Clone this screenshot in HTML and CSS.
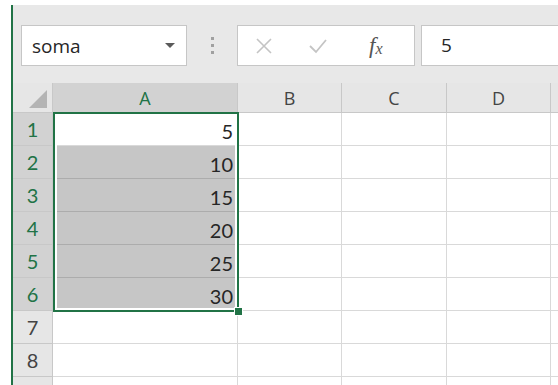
FILE: index.html
```html
<!DOCTYPE html>
<html lang="pt">
<head>
  <meta charset="UTF-8">
  <title>Planilha</title>
  <link rel="stylesheet" href="styles.css">
</head>
<body>
  <div class="app">
    <div class="formula-bar">
      <div class="name-box">
        <span class="name-box__value">soma</span>
        <span class="name-box__arrow"></span>
      </div>
      <div class="grip"><i></i><i></i><i></i></div>
      <div class="fx-buttons">
        <svg class="fx-buttons__icon" width="18" height="18" viewBox="0 0 18 18">
          <path d="M2 2 L16 16 M16 2 L2 16" stroke="#c4c4c4" stroke-width="1.6" fill="none"/>
        </svg>
        <svg class="fx-buttons__icon" width="20" height="18" viewBox="0 0 20 18">
          <path d="M2 9 L8 15 L18 3" stroke="#c4c4c4" stroke-width="1.8" fill="none"/>
        </svg>
        <span class="fx-buttons__fx">f<sub>x</sub></span>
      </div>
      <div class="formula-input">5</div>
    </div>

    <div class="sheet">
      <div class="grid">
        <div class="corner"><span class="corner__tri"></span></div>
        <div class="col-head col-head--sel">A</div>
        <div class="col-head">B</div>
        <div class="col-head">C</div>
        <div class="col-head">D</div>
        <div class="col-head col-head--rest"></div>

        <div class="row-head row-head--sel">1</div>
        <div class="cell cell--num">5</div><div class="cell"></div><div class="cell"></div><div class="cell"></div><div class="cell cell--rest"></div>

        <div class="row-head row-head--sel">2</div>
        <div class="cell cell--num cell--sel">10</div><div class="cell"></div><div class="cell"></div><div class="cell"></div><div class="cell cell--rest"></div>

        <div class="row-head row-head--sel">3</div>
        <div class="cell cell--num cell--sel">15</div><div class="cell"></div><div class="cell"></div><div class="cell"></div><div class="cell cell--rest"></div>

        <div class="row-head row-head--sel">4</div>
        <div class="cell cell--num cell--sel">20</div><div class="cell"></div><div class="cell"></div><div class="cell"></div><div class="cell cell--rest"></div>

        <div class="row-head row-head--sel">5</div>
        <div class="cell cell--num cell--sel">25</div><div class="cell"></div><div class="cell"></div><div class="cell"></div><div class="cell cell--rest"></div>

        <div class="row-head row-head--sel">6</div>
        <div class="cell cell--num cell--sel">30</div><div class="cell"></div><div class="cell"></div><div class="cell"></div><div class="cell cell--rest"></div>

        <div class="row-head">7</div>
        <div class="cell"></div><div class="cell"></div><div class="cell"></div><div class="cell"></div><div class="cell cell--rest"></div>

        <div class="row-head">8</div>
        <div class="cell"></div><div class="cell"></div><div class="cell"></div><div class="cell"></div><div class="cell cell--rest"></div>

        <div class="row-head"></div>
        <div class="cell"></div><div class="cell"></div><div class="cell"></div><div class="cell"></div><div class="cell cell--rest"></div>
      </div>
      <div class="selection"><span class="selection__handle"></span></div>
    </div>
  </div>
</body>
</html>
```

FILE: styles.css
```css
* {
  box-sizing: border-box;
}

body {
  margin: 0;
  background-color: #fff;
  overflow: hidden;
  height: 385px;
}

.app {
  margin: 5px 0 0 11px;
  border-left: 2px solid #217346;
  height: 380px;
  overflow: hidden;
}

.formula-bar {
  display: flex;
  align-items: flex-start;
  height: 78px;
  padding: 20px 0 0 8px;
  background-color: #e8e8e8;
  font-family: "Open Sans", sans-serif;
}

.name-box {
  display: flex;
  align-items: center;
  justify-content: space-between;
  width: 166px;
  height: 41px;
  padding: 0 11px 0 10px;
  background-color: #fff;
  border: 1px solid #c6c6c6;
  font-size: 19px;
  color: #262626;
}

.name-box__arrow {
  width: 0;
  height: 0;
  border-left: 5px solid transparent;
  border-right: 5px solid transparent;
  border-top: 5px solid #5a5a5a;
}

.grip {
  display: flex;
  flex-direction: column;
  gap: 4px;
  width: 50px;
  height: 41px;
  padding-top: 12px;
  align-items: center;
}

.grip i {
  width: 3px;
  height: 3px;
  background-color: #a0a0a0;
}

.fx-buttons {
  display: flex;
  align-items: center;
  width: 178px;
  height: 41px;
  padding: 0 0 0 17px;
  background-color: #fff;
  border: 1px solid #c6c6c6;
}

.fx-buttons__icon {
  margin-right: 35px;
}

.fx-buttons__fx {
  margin-left: 6px;
  font-family: "Liberation Serif", serif;
  font-style: italic;
  font-size: 23px;
  color: #555;
}

.fx-buttons__fx sub {
  font-size: 16px;
  vertical-align: -1px;
}

.formula-input {
  flex: 1;
  height: 41px;
  margin-left: 6px;
  padding: 6px 0 0 19px;
  background-color: #fff;
  border: 1px solid #c6c6c6;
  border-right: none;
  font-size: 19px;
  color: #262626;
}

.sheet {
  position: relative;
}

.grid {
  display: grid;
  grid-template-columns: 40px 185px 104px 105px 104px 1fr;
  grid-template-rows: 30px repeat(9, 33px);
  font-family: Lato, "Liberation Sans", sans-serif;
  font-size: 20px;
  color: #262626;
}

.corner,
.col-head,
.row-head {
  background-color: #e6e6e6;
  border-right: 1px solid #c8c8c8;
  border-bottom: 1px solid #c8c8c8;
  color: #444;
}

.corner {
  position: relative;
}

.corner__tri {
  position: absolute;
  right: 5px;
  bottom: 4px;
  width: 0;
  height: 0;
  border-left: 18px solid transparent;
  border-bottom: 18px solid #b4b4b4;
}

.col-head {
  display: flex;
  align-items: center;
  justify-content: center;
  font-family: "Open Sans", sans-serif;
  font-size: 18px;
}

.col-head--sel {
  background-color: #d2d2d2;
  color: #217346;
}

.col-head--rest {
  border-right: none;
}

.row-head {
  display: flex;
  align-items: center;
  justify-content: center;
}

.row-head--sel {
  background-color: #d2d2d2;
  color: #217346;
}

.cell {
  border-right: 1px solid #d9d9d9;
  border-bottom: 1px solid #d9d9d9;
  background-color: #fff;
}

.cell--num {
  display: flex;
  align-items: flex-end;
  justify-content: flex-end;
  padding: 0 4px 2px 0;
}

.cell--sel {
  background-color: #c6c6c6;
  border-bottom-color: #acacac;
}

.cell--rest {
  border-right: none;
}

.selection {
  position: absolute;
  left: 40px;
  top: 29px;
  width: 186px;
  height: 200px;
  border: 2px solid #217346;
  box-shadow: inset 0 0 0 2px #fff;
  pointer-events: none;
}

.selection__handle {
  position: absolute;
  right: -6px;
  bottom: -6px;
  width: 9px;
  height: 9px;
  background-color: #217346;
  border: 1px solid #fff;
}
```
